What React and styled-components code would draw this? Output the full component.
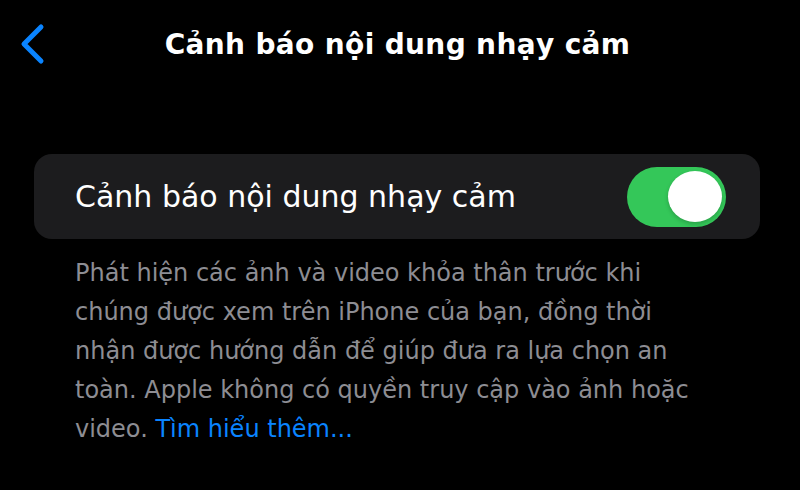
import React, { useState } from 'react';
import styled, { createGlobalStyle } from 'styled-components';

const GlobalStyle = createGlobalStyle`
  html, body {
    margin: 0;
    padding: 0;
    background: #000;
  }
  body {
    font-family: "DejaVu Sans", Inter, "Liberation Sans", sans-serif;
    -webkit-font-smoothing: antialiased;
  }
`;

const Screen = styled.div`
  width: 800px;
  height: 490px;
  background: #000;
  color: #fff;
  overflow: hidden;
`;

const NavBar = styled.header`
  position: relative;
  height: 88px;
  display: flex;
  align-items: center;
  justify-content: center;
`;

const BackButton = styled.button`
  position: absolute;
  left: 18px;
  top: 23px;
  width: 28px;
  height: 42px;
  padding: 0;
  border: none;
  background: transparent;
  cursor: pointer;
`;

const Title = styled.h1`
  margin: 0 0 0 -5px;
  font-size: 28px;
  font-weight: 700;
  letter-spacing: 0.35px;
  color: #fff;
`;

const Section = styled.section`
  padding: 66px 40px 0 34px;
`;

const Card = styled.div`
  height: 85px;
  background: #1c1c1e;
  border-radius: 18px;
  display: flex;
  align-items: center;
  justify-content: space-between;
  padding: 0 34px 0 41px;
`;

const Label = styled.span`
  font-size: 30px;
  font-weight: 400;
`;

const Switch = styled.button`
  width: 99px;
  height: 60px;
  border: none;
  border-radius: 30px;
  background: ${({ $on }) => ($on ? '#34c759' : '#39393d')};
  display: flex;
  align-items: center;
  justify-content: ${({ $on }) => ($on ? 'flex-end' : 'flex-start')};
  padding: 0 4px;
  cursor: pointer;
`;

const Knob = styled.span`
  width: 54px;
  height: 51px;
  border-radius: 50%;
  background: #fff;
  box-shadow: 0 2px 4px rgba(0, 0, 0, 0.2);
`;

const Footer = styled.p`
  margin: 0;
  padding: 15px 0 0 41px;
  width: 625px;
  font-size: 24px;
  line-height: 39px;
  color: #8d8d93;
`;

const Link = styled.a`
  color: #0a84ff;
  text-decoration: none;
`;

const Chevron = () => (
  <svg width="28" height="42" viewBox="0 0 28 42">
    <path
      d="M23 4 L6 21 L23 38"
      fill="none"
      stroke="#0a84ff"
      strokeWidth="5"
      strokeLinecap="round"
      strokeLinejoin="round"
    />
  </svg>
);

export default function App() {
  const [on, setOn] = useState(true);

  return (
    <Screen>
      <GlobalStyle />
      <NavBar>
        <BackButton aria-label="Quay lại">
          <Chevron />
        </BackButton>
        <Title>Cảnh báo nội dung nhạy cảm</Title>
      </NavBar>
      <Section>
        <Card>
          <Label>Cảnh báo nội dung nhạy cảm</Label>
          <Switch $on={on} onClick={() => setOn((s) => !s)}>
            <Knob />
          </Switch>
        </Card>
        <Footer>
          Phát hiện các ảnh và video khỏa thân trước khi chúng được xem trên
          iPhone của bạn, đồng thời nhận được hướng dẫn để giúp đưa ra lựa chọn
          an toàn. Apple không có quyền truy cập vào ảnh hoặc video.{' '}
          <Link href="#">Tìm hiểu thêm...</Link>
        </Footer>
      </Section>
    </Screen>
  );
}
